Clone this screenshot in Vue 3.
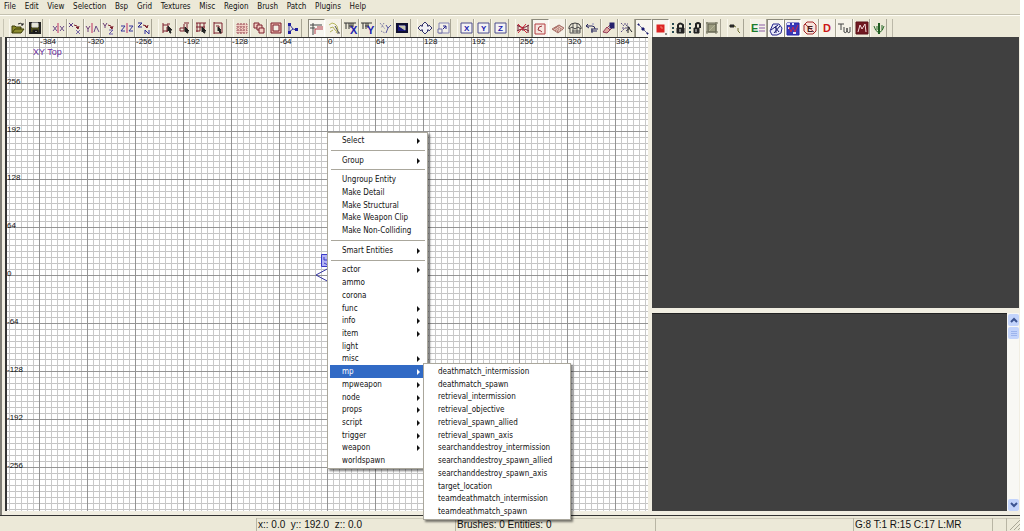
<script setup>
const menus = ['File', 'Edit', 'View', 'Selection', 'Bsp', 'Grid', 'Textures', 'Misc', 'Region', 'Brush', 'Patch', 'Plugins', 'Help']

const MAROON = '#7c1f2c'
const NAVY = '#22228c'
const PINK = '#f3cfc4'
const INK = '#222222'

// p: [path, stroke, fill, stroke width, dashes]   t: [x, y, text, colour, size]
const tools = [
  { n: 'Open', p: [['M2 13V6h3l1 1h5v2', '#3c3c08', '#8a8a28'], ['M2 13l3-4h9l-3 4z', '#3c3c08', '#8c8c30'], ['M8 4q3-2 5 1m0-2v2h-2', INK]] },
  { n: 'Save', p: [['M3 3h10v10H3z', INK, '#4a4a18', 2], ['M5 3h6v4H5z', '#ddd', '#e8e8d8'], ['M6 10h5v3H6z', INK, '#111'], ['M9 11v1', '#eee']] },
  { n: 'Flip X', g: 1, p: [['M8 3v10', '#c03060'], ['M3 6l4 5M7 6l-4 5M10 6l4 5M14 6l-4 5', '#6b4c88']] },
  { n: 'Rotate X', p: [['M7 5q4 0 4 4m-2-2l2 2 1-3', MAROON], ['M2 3l4 4M6 3l-4 4', '#5b3c88'], ['M9 10l4 4M13 10l-4 4', '#7b6ca8']] },
  { n: 'Flip Y', p: [['M8 3v10', '#c03060'], ['M2 6l2 3 2-3M4 9v3', '#6b3c78'], ['M10 12l2-6 3 6', '#6b4c88']] },
  { n: 'Rotate Y', p: [['M7 5q4 0 4 4m-2-2l2 2 1-3', MAROON], ['M2 3l2 3 2-3M4 6v2', '#6b3c78'], ['M8 10h4l-4 4h4', '#6b5caa']] },
  { n: 'Flip Z', p: [['M8 3v10', '#c03060'], ['M2 6h4l-4 5h4M10 6h4l-4 5h4', '#34349c']] },
  { n: 'Rotate Z', p: [['M7 5q4 0 4 3m-2-2l2 2 1-3', MAROON], ['M2 3h4l-4 4h4', NAVY], ['M9 14v-4l4 4v-4', '#34349c']] },
  { n: 'Select complete tall', g: 1, p: [['M4 3v10M4 5h5v6H4M8 4h3M8 7v5', MAROON], ['M9 6l4 4-2 0 1 3-1 0-1-3-1 1z', INK, INK]] },
  { n: 'Select touching', p: [['M8 3h5M8 4v7H4V8h4M11 4v9', MAROON], ['M9 7l4 4-2 0 1 2h-1l-1-2-1 1z', INK, INK]] },
  { n: 'Select partial tall', p: [['M3 3h10M4 3v9M7 3v8H3M11 3v8M3 7h9', MAROON], ['M9 7l4 4-2 0 1 2h-1l-1-2-1 1z', INK, INK]] },
  { n: 'Select inside', p: [['M4 2v12M4 3h8v10H4M6 6h3v3', MAROON], ['M8 7l3 3-1 0 1 3h-1l-1-3-1 1z', INK, INK]] },
  { n: 'CSG subtract', g: 1, p: [['M3 4h10v9H3z', PINK, PINK], ['M3 4h10M3 7h10M3 10h10M3 13h10', '#8c3c48', 'none', 1, '2 1'], ['M3 4v9M6 4v9M9 4v9M13 4v9', '#b06c74', 'none', 1, '1 1']] },
  { n: 'CSG merge', p: [['M3 3h5v5H3z', MAROON, PINK], ['M6 5h5v5H6z', MAROON, PINK], ['M8 8h5v5H8z', MAROON, PINK]] },
  { n: 'Hollow', p: [['M3 3h10v10H3z', MAROON, '#eab6aa'], ['M5 5h6v6H5z', MAROON, '#f4eee4']] },
  { n: 'Clipper', p: [['M4 4v9M4 12l4-3 4 1M5 5l3 4', '#3434a0'], ['M4 4h1v1H4zM4 12h1v1H4zM11 9h1v1h-1z', '#2020a0', '#2020a0', 2]] },
  { n: 'Texture view', g: 1, on: 1, p: [['M2 4h12M5 2v12M2 7h5', '#444'], ['M7 8h8M7 8v5M9 6h6', '#b03a48']] },
  { n: 'Cubic clipping', lit: 1, p: [['M3 5l3-2 3 1 2 2 1 4-2 3', '#b8b860'], ['M4 8l3-1 2 3 3 2M4 12l3-2', '#b0b05c'], ['M9 6l4 7M11 13h3', '#555']] },
  { n: 'Texture X', p: [['M1 3h12M3 3v6M6 3v6M8 3v5M6 6h4M10 3v4', '#333']], t: [[7, 14, 'X', '#2222b0', 11]] },
  { n: 'Texture Y', p: [['M1 3h11M3 3v6M6 3v6M8 3v5M5 6h4', '#333']], t: [[7, 14, 'Y', '#2222b0', 11]] },
  { n: 'Texture XY', p: [['M3 3l5 6M7 3l-3 5M4 11l4 2', '#666699', 'none', 1, '1 1'], ['M9 5l2 3 3-3M11 8l-2 5', '#5555a0']] },
  { n: 'Gradient', p: [['M3 4h10v8H3z', '#111130', '#18187c', 2], ['M5 6l6 4V6z', '#c8c8b0', '#c8c8b0']] },
  { n: 'Free rotation', g: 1, p: [['M8 2l3 3-1 1h2V5l3 3-3 3v-1h-2l1 1-3 3-3-3 1-1H4v1L1 8l3-3v1h2L5 5z', '#34346c', '#f0f0f4']] },
  { n: 'Free scaling', p: [['M4 3h10v10H4z', '#8484b4', '#f3f0e8'], ['M3 9h4v4H3z', '#6c6ca8', '#f3f0e4'], ['M8 9l3-3M8 6h3v3', NAVY]] },
  { n: 'Lock X', g: 1, p: [['M3 3h11v10H3z', '#4c4c8c', '#f4f3f4']], t: [[6, 11, 'X', '#2020b0', 8]] },
  { n: 'Lock Y', p: [['M3 3h11v10H3z', '#4c4c8c', '#f4f3f4']], t: [[6, 11, 'Y', '#2020b0', 8]] },
  { n: 'Lock Z', p: [['M3 3h11v10H3z', '#4c4c8c', '#f4f3f4']], t: [[6, 11, 'Z', '#2020b0', 8]] },
  { n: 'Disable patches', g: 1, p: [['M2 5q6 5 12 0M2 11q6-4 12 0M3 5v6M8 7v4M13 5v8', '#772036'], ['M3 4l9 9M11 4l-8 9', '#d02838', 'none', 1]] },
  { n: 'Patch wireframe', on: 1, p: [['M3 3h10v10H3z', '#b43c40', '#f6e6e0'], ['M10 5q-4 0-4 4 2 0 4 2', '#9c3038']] },
  { n: 'Patch bend', lit: 1, p: [['M2 9l7-4 5 3-6 5z', '#a87068', '#ecd0c6'], ['M5 7l6 4M7 6l6 4M4 8l5 4M5 11l6-5M3 10l7-5M7 12l6-5', '#a06058', 'none', 1, '1 1']] },
  { n: 'Patch cap', p: [['M2 7q1-4 6-4t6 4v2l-3-2-3 2-3-2-3 2z', '#3a3a3a'], ['M6 4v9M10 4v9M3 9v4h10V8M5 11h8', '#555']] },
  { n: 'Patch invert', p: [['M2 6h6q3 0 3 3M4 4L2 6l3 2M7 9h7M7 11h6M8 9v4', '#26265c'], ['M8 4h2', '#8c8cc0']] },
  { n: 'Patch weld', p: [['M2 12l4-5 3 3-3 3zM6 8l4-4M9 10l4-4', '#943c58', '#e0a8a0'], ['M10 4h2v3h-2z', '#24206c', '#24206c', 3]] },
  { n: 'Patch drill', p: [['M3 3l3 3M6 4h4M4 8h5M3 12l4-4', '#5a4c84', 'none', 1, '2 1'], ['M8 5l4 3-4 3', '#44446c'], ['M10 13V7l4 5', INK]] },
  { n: 'Show connections', on: 1, p: [['M3 3l10 10', '#6c6c94'], ['M3 3h1v1H3zM7 7h2v2H7zM12 12h1v1h-1z', '#181870', '#181870']] },
  { n: 'Paint color', on: 1, p: [['M5 5h5v5H5z', '#dc2424', '#e02020', 3], ['M7 6h2v2', '#f08070'], ['M13 12v2', INK]] },
  { n: 'Texture lock', p: [['M3 3v11', '#244850', 'none', 2, '2 2'], ['M7 8h7v5H7z', INK, INK], ['M8 8V5q2-3 5 0v3', INK, 'none', 2], ['M10 9v3', '#ddd']] },
  { n: 'Rotation lock', p: [['M3 3v11', '#244850', 'none', 2, '2 2'], ['M7 8h5v5H7z', INK, INK], ['M9 8V4q2-2 4 0v4', INK, 'none', 2], ['M9 9v3', '#ddd']] },
  { n: 'Region', p: [['M4 4h8v8H4z', '#5c5c48', '#9c9c80'], ['M2 3h12M3 2v12M12 2v12M2 12h12', '#6c6c58'], ['M5 11l6-6', '#b4b498']] },
  { n: 'Camera', g: 1, p: [['M3 5h4v2H3z', INK, '#333'], ['M7 6l2 1M11 8v3M11 11l2 2', '#777738']] },
  { n: 'Entity list', g: 1, lit: 1, p: [['M9 5h6M9 8h6M9 11h6', '#8a5ca4']], t: [[1, 12, 'E', '#1c7c2c', 11]] },
  { n: 'Rotate view', on: 1, p: [['M5 3h6l3 4-1 5-4 2H4l-2-4z', '#24248c', '#e8e8f8'], ['M3 9l7-5M6 12l6-7M7 6l4 5M8 5v7', '#1c1c70']] },
  { n: 'Texture grid', on: 1, p: [['M2 2h12v12H2z', '#2424a8', '#3838b8'], ['M2 3h3M7 3h2M3 7h2M8 12h3', '#e4e4fa', 'none', 2], ['M4 6l2 5 2-5 2 5 3-7', '#c02850']] },
  { n: 'No entities', lit: 1, p: [['M5 2h6l3 3v6l-3 3H5l-3-3V5z', '#a42828', '#f8e4dc'], ['M3 4l10 9', '#a42828']], t: [[5, 12, 'E', '#441c1c', 9]] },
  { n: 'Detail', lit: 1, t: [[4, 12, 'D', '#cc1616', 11]] },
  { n: 'Texture window', lit: 1, p: [['M2 4h6M5 4v6', '#444'], ['M8 7v5q2 2 3-1V8v3q1 3 3 1V7', '#444']] },
  { n: 'Model', p: [['M2 2h12v12H2z', '#5c1018', '#701820'], ['M4 12l2-7 2 4 3-5 1 8', '#f6dede']] },
  { n: 'Ground', p: [['M8 3v11', '#205c20', 'none', 2], ['M3 6q1 5 5 7 4-2 5-7M6 6v4M11 5v5', '#286828']] },
]

const topMarks = [-384, -320, -256, -192, -128, -64, 0, 64, 128, 192, 256, 320, 384]
const sideMarks = [256, 192, 128, 64, 0, -64, -128, -192, -256]

const contextItems = [
  { label: 'Select', sub: true }, { sep: true },
  { label: 'Group', sub: true }, { sep: true },
  { label: 'Ungroup Entity' }, { label: 'Make Detail' }, { label: 'Make Structural' },
  { label: 'Make Weapon Clip' }, { label: 'Make Non-Colliding' }, { sep: true },
  { label: 'Smart Entities', sub: true }, { sep: true },
  { label: 'actor', sub: true }, { label: 'ammo' }, { label: 'corona' },
  { label: 'func', sub: true }, { label: 'info', sub: true }, { label: 'item', sub: true },
  { label: 'light' }, { label: 'misc', sub: true }, { label: 'mp', sub: true, active: true },
  { label: 'mpweapon', sub: true }, { label: 'node', sub: true }, { label: 'props', sub: true },
  { label: 'script', sub: true }, { label: 'trigger', sub: true }, { label: 'weapon', sub: true },
  { label: 'worldspawn' },
]

const mpItems = [
  'deathmatch_intermission', 'deathmatch_spawn', 'retrieval_intermission', 'retrieval_objective',
  'retrieval_spawn_allied', 'retrieval_spawn_axis', 'searchanddestroy_intermission',
  'searchanddestroy_spawn_allied', 'searchanddestroy_spawn_axis', 'target_location',
  'teamdeathmatch_intermission', 'teamdeathmatch_spawn',
]
</script>

<template>
  <div class="app">
    <nav class="menubar">
      <button v-for="m in menus" :key="m" type="button">{{ m }}</button>
    </nav>

    <div class="toolbar">
      <div class="tools">
        <button
          v-for="t in tools" :key="t.n" type="button" :aria-label="t.n"
          :class="['tool', { first: t.g, on: t.on, lit: t.lit }]"
        >
          <svg viewBox="0 0 16 16" width="16" height="16" aria-hidden="true">
            <path
              v-for="(p, i) in t.p || []" :key="i" :d="p[0]" :stroke="p[1]"
              :fill="p[2] || 'none'" :stroke-width="p[3] || 1" :stroke-dasharray="p[4]"
            />
            <text
              v-for="(x, i) in t.t || []" :key="'t' + i" :x="x[0]" :y="x[1]"
              :fill="x[3]" :font-size="x[4]"
            >{{ x[2] }}</text>
          </svg>
        </button>
      </div>
    </div>

    <main class="workspace">
      <section class="xy">
        <div class="top-marks"><span v-for="n in topMarks" :key="n">{{ n }}</span></div>
        <div class="view-name">XY Top</div>
        <div class="side-marks"><span v-for="n in sideMarks" :key="n">{{ n }}</span></div>
        <svg class="entity" viewBox="0 0 14 30" width="14" height="30" aria-hidden="true">
          <path d="M6.500 1.500h7v12h-7z" fill="#b4b4f4" stroke="#3a3ac8" />
          <path d="M9 4v3h3M9 10l4 2" fill="none" stroke="#3a3ac8" />
          <path d="M14 15L1 22l13 7" fill="none" stroke="#3434a0" />
        </svg>
      </section>
      <div class="side">
        <section class="camera"></section>
        <section class="textures">
          <div class="scroll">
            <button type="button" aria-label="Scroll up">
              <svg viewBox="0 0 11 11" width="11" height="11"><path d="M3 7l3-3 3 3" /></svg>
            </button>
            <div class="thumb"><i></i><i></i><i></i></div>
            <button type="button" class="down" aria-label="Scroll down">
              <svg viewBox="0 0 11 11" width="11" height="11"><path d="M3 4l3 3 3-3" /></svg>
            </button>
          </div>
        </section>
      </div>
    </main>

    <footer class="status">
      <span></span>
      <span>x:: 0.0&nbsp; y:: 192.0&nbsp; z:: 0.0</span>
      <span>Brushes: 0 Entities: 0</span>
      <span></span>
      <span>G:8 T:1 R:15 C:17 L:MR</span>
      <span></span>
      <span class="grip">
        <svg viewBox="0 0 12 12" width="12" height="12" aria-hidden="true"><path d="M2 12L12 2M6 12l6-6M10 12l2-2" /></svg>
      </span>
    </footer>

    <div class="popup context" role="menu">
      <template v-for="(it, i) in contextItems" :key="i">
        <hr v-if="it.sep">
        <button v-else type="button" role="menuitem" :class="{ active: it.active }">
          {{ it.label }}
          <svg v-if="it.sub" viewBox="0 0 3 6" width="3" height="6" aria-hidden="true"><path d="M0 0l3 3-3 3z" /></svg>
        </button>
      </template>
    </div>
    <div class="popup submenu" role="menu">
      <button v-for="s in mpItems" :key="s" type="button" role="menuitem">{{ s }}</button>
    </div>
  </div>
</template>

<style>
body { background: #fff; overflow: hidden; }
</style>

<style scoped>
.app {
  position: relative;
  display: flex;
  flex-direction: column;
  box-sizing: border-box;
  height: 100vh;
  padding-right: 4px;
  font: 8px/12px "DejaVu Sans Condensed", "DejaVu Sans", sans-serif;
  color: #111;
}
button {
  margin: 0;
  padding: 0;
  border: 0;
  background: none;
  font: inherit;
  color: inherit;
}
.menubar {
  height: 14px;
  padding-left: 4px;
  background: #ece9d8;
  display: grid;
  grid-auto-flow: column;
  justify-content: space-between;
  padding-right: calc(100% - 366px);
}
.menubar button { white-space: nowrap; }
.toolbar {
  height: 23px;
  box-sizing: border-box;
  padding: 4px 0 1px 3px;
  border-top: 1px solid #c4c1b0;
  background: #ece9d8;
  box-shadow: inset 0 1px #fffef6;
}
.tools {
  display: flex;
  max-width: 890px;
  height: 18px;
  box-sizing: border-box;
  padding: 0 5px;
  border-left: 1px solid #c8c5b4;
  border-right: 1px solid #bbb8a8;
}
.tool {
  display: flex;
  flex: 1 0 0;
  justify-content: center;
  align-items: center;
  overflow: hidden;
  min-width: 0;
  border-right: 1px solid #a8a595;
  border-left: 1px solid #faf8ee;
}
.tool.first { margin-left: 6px; }
.tool.on {
  border-top: 1px solid #8c8a7c;
  border-left-color: #8c8a7c;
  border-right-color: #fff;
  background: #f8f6f0;
}
.tool.lit { background: #f5f2e8; }
.tool svg { flex: none; }
.tool text { font-family: "Liberation Sans", sans-serif; font-weight: bold; }
.workspace {
  display: grid;
  grid-template-columns: 643fr 367fr;
  column-gap: 4px;
  flex: 1;
  min-height: 0;
  padding: 0 1px 4px 3px;
  border-left: 2px solid #807e76;
  background: #f1eee2;
}
.xy {
  position: relative;
  overflow: hidden;
  border-top: 1px solid #333;
  border-left: 2px solid #333;
  background-color: #fff;
  background-image:
    linear-gradient(90deg, #949494 1px, transparent 1px),
    linear-gradient(#949494 1px, transparent 1px),
    linear-gradient(90deg, #c9c9c9 1px, transparent 1px),
    linear-gradient(#c4c4c4 1px, transparent 1px);
  background-size: 48px 48px, 48px 48px, 6px 6px, 6px 6px;
  background-position: 32px 45px, 32px 45px, 2px 3px, 2px 3px;
  font: 8px/8px "Liberation Sans", Arial, sans-serif;
}
.top-marks { display: flex; padding-left: 33px; }
.top-marks span { flex: none; width: 48px; }
.view-name { padding: 2px 0 0 26px; font-size: 9px; line-height: 8px; color: #6b2c9c; }
.side-marks { padding-top: 22px; }
.side-marks span { display: block; height: 48px; }
.entity { position: absolute; left: 308px; top: 215px; }
.side {
  display: grid;
  grid-template-rows: 272fr 198fr;
  row-gap: 5px;
}
.camera { background: #404040; }
.textures {
  display: flex;
  justify-content: flex-end;
  background: #404040;
  box-shadow: inset 0 1px #222;
}
.scroll {
  display: flex;
  flex-direction: column;
  width: 12px;
  background: #f8f8f4;
  padding-top: 1px;
  box-sizing: border-box;
}
.scroll button, .thumb {
  height: 12px;
  margin-left: 1px;
  border-radius: 2px;
  background: #c3d4fb;
}
.scroll svg { display: block; fill: none; stroke: #3c5490; stroke-width: 2; }
.scroll .down { margin-top: auto; }
.thumb {
  display: grid;
  align-content: center;
  justify-content: center;
  gap: 1px;
  margin-top: 1px;
}
.thumb i { width: 6px; height: 1px; background: #9cb4ec; }
.status {
  display: grid;
  grid-template-columns: 256fr 199fr 200fr 198fr 139fr 14fr 14fr;
  height: 15px;
  border-top: 1px solid #333;
  background: #ece9d8;
  font: 10px/15px "Liberation Sans", Arial, sans-serif;
}
.status span {
  overflow: hidden;
  margin-top: 2px;
  padding-left: 1px;
  border-left: 1px solid #b8b5a4;
  line-height: 14px;
  white-space: nowrap;
  box-shadow: inset 0 1px #cfccbc;
}
.status span:first-child { border: 0; box-shadow: none; }
.grip svg { display: block; fill: none; stroke: #aaa797; }
.popup {
  position: absolute;
  display: flex;
  flex-direction: column;
  box-sizing: border-box;
  padding: 1px 2px;
  border: 1px solid #aaa79c;
  background: #fff;
  box-shadow: 2px 2px 2px rgba(0, 0, 0, 0.5);
}
.popup button {
  display: flex;
  flex: 1;
  justify-content: space-between;
  align-items: center;
  min-height: 0;
  padding: 1px 5px 0 12px;
  line-height: 12px;
  text-align: left;
  white-space: nowrap;
}
.popup svg { fill: #111; }
.popup .active { background: #316ac5; color: #fff; }
.popup .active svg { fill: #fff; }
.popup hr {
  width: 94px;
  height: 1px;
  margin: 3px 0;
  border: 0;
  background: #aaa79c;
  align-self: center;
}
.context { left: 327px; top: 132px; width: 101px; height: 337px; }
.submenu { left: 423px; top: 363px; width: 148px; height: 157px; }
</style>
